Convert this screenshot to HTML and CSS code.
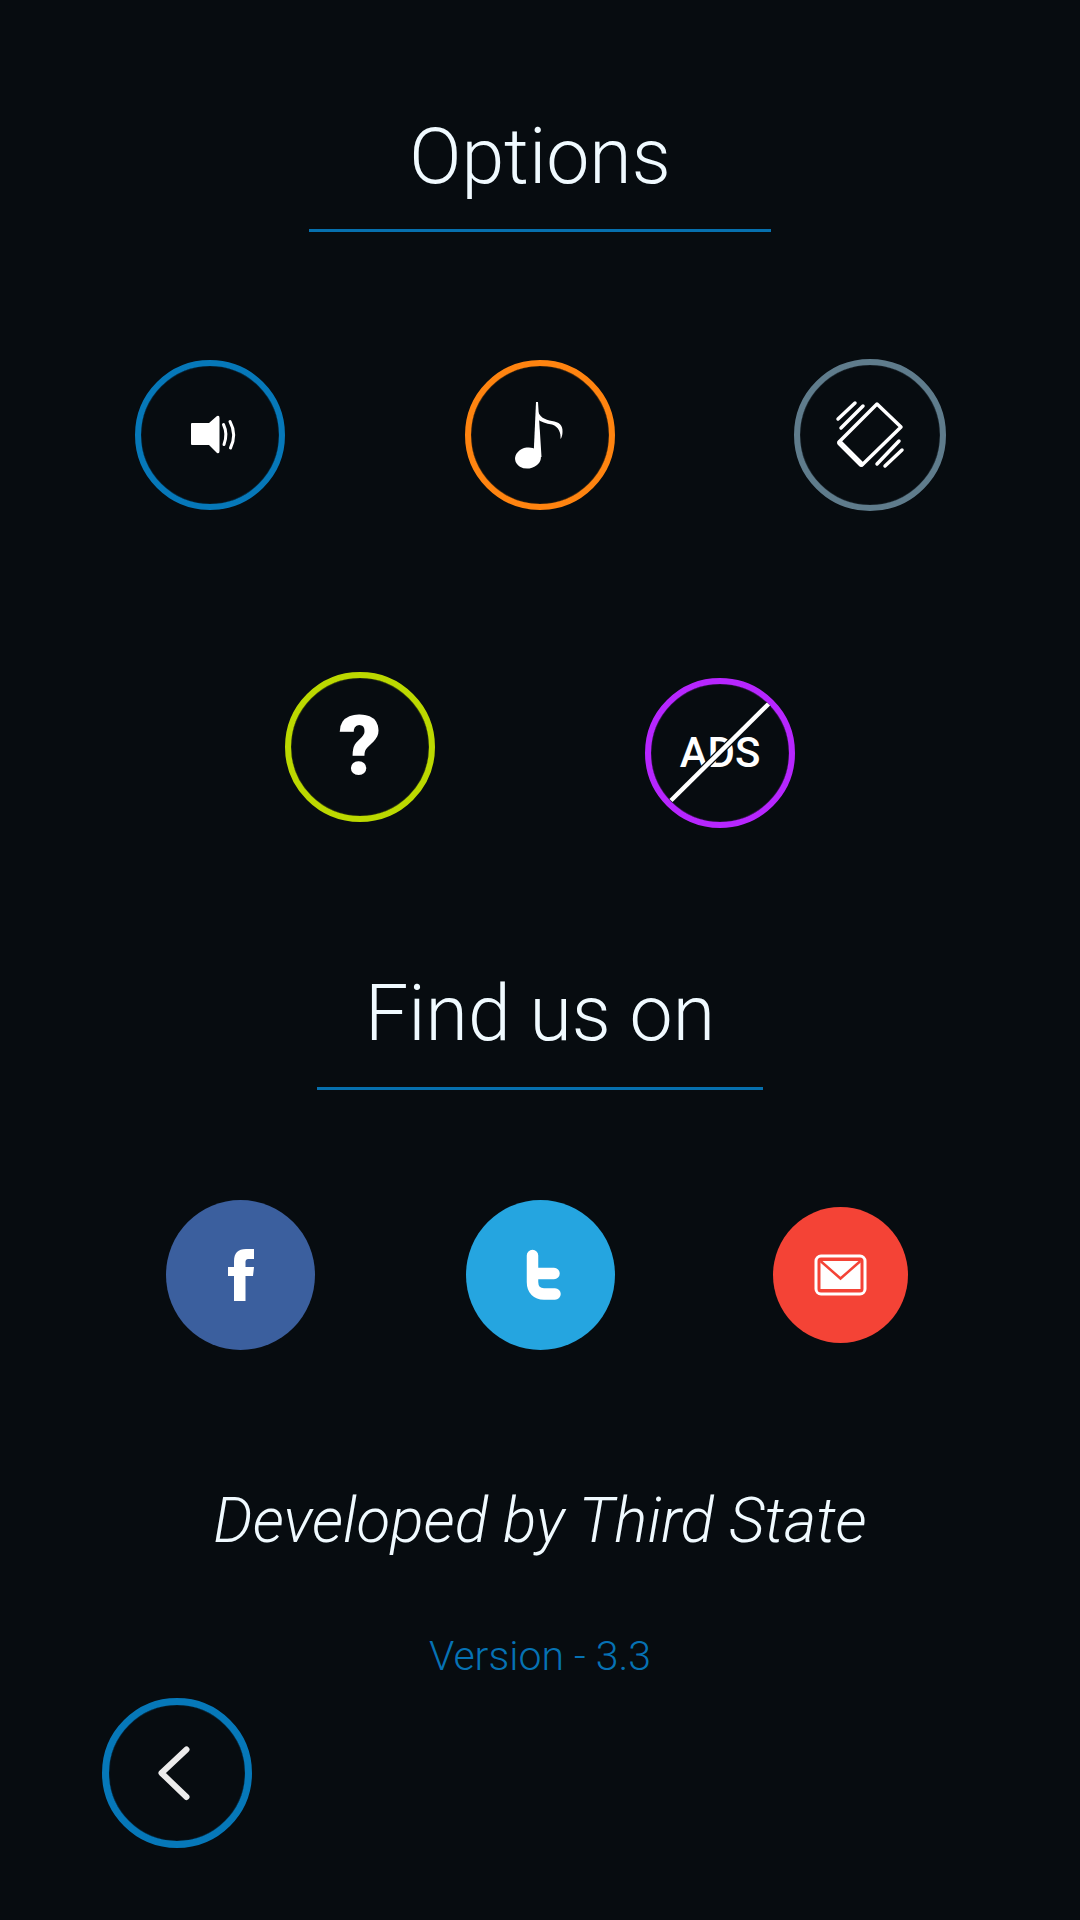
FILE: index.html
```html
<!DOCTYPE html>
<html lang="en">
<head>
    <meta charset="UTF-8">
    <meta name="viewport" content="width=device-width, initial-scale=1.0">
    <title>Options</title>
    <link rel="stylesheet" href="styles.css">
</head>
<body>

    <div class="options-screen">

        <!-- Options -->
        <div class="section-head options-head">
            <h1>Options</h1>
        </div>

        <div class="icon-row row-settings">
            <button class="round-btn ring-blue">
                <svg width="60" height="60" viewBox="0 0 60 60">
                    <path d="M12 18 H29 L37 11 Q39.500 10 39.500 13 V46 Q39.500 49 37 48 L29 40 H12 Q11 40 11 39 V19 Q11 18 12 18 Z" fill="#fff"/>
                    <path d="M43.500 19.500 Q48 29 44 39.500" class="line thin"/>
                    <path d="M50 16.500 Q57 29.500 50.500 43" class="line thin"/>
                </svg>
            </button>
            <button class="round-btn ring-orange">
                <svg width="70" height="80" viewBox="0 0 70 80">
                    <ellipse cx="23" cy="63" rx="13" ry="10.500" fill="#fff" transform="rotate(-8 23 63)"/>
                    <path d="M28.500 62 L31 7 H33 L36.500 62 Z" fill="#fff"/>
                    <path d="M32 14 C34 22 40 25 47 26 C54 27 58 30 57.500 37 C57.500 40 56.500 43 55.500 44 C56 38 54 32 47 29.500 C41 28.500 36 27 32 24 Z" fill="#fff"/>
                </svg>
            </button>
            <button class="round-btn ring-slate ring-wide">
                <svg width="70" height="70" viewBox="0 0 70 70">
                    <path d="M42 4 L66 27 L27 65 L4 42 Z" class="line phone"/>
                    <path d="M5 43 L26 64" class="line bezel"/>
                    <path d="M3 19 L20 3 M6 28 L28 6 M42 64 L64 41 M50 66 L67 50" class="line phone"/>
                </svg>
            </button>
        </div>

        <div class="icon-row row-extra">
            <button class="round-btn ring-lime">
                <span class="help-mark">?</span>
            </button>
            <button class="round-btn ring-purple no-ads">
                <span class="ads-label">ADS</span>
                <svg class="ads-slash" width="150" height="150" viewBox="0 0 150 150">
                    <path d="M123.500 26 L26 122.500" class="slash-edge"/>
                    <path d="M123.500 26 L26 122.500" class="slash"/>
                </svg>
            </button>
        </div>

        <!-- Find us on -->
        <div class="section-head find-head">
            <h1>Find us on</h1>
        </div>

        <div class="icon-row row-social">
            <button class="round-btn fill-facebook">
                <svg width="60" height="60" viewBox="0 0 60 60">
                    <path d="M23 56 V31 H17 V22 H23 V16 C23 8 27 4 35 4 H43 V14 H38 C35 14 34.500 15 34.500 18 V22 H43 L42 31 H34.500 V56 Z" fill="#fff"/>
                </svg>
            </button>
            <button class="round-btn fill-twitter">
                <svg width="60" height="60" viewBox="0 0 60 60">
                    <path d="M21.500 10.500 V37 C21.500 45 26 49 33 49 H44 M21.500 28.500 H43" class="line bird"/>
                </svg>
            </button>
            <button class="round-btn fill-mail">
                <svg width="60" height="60" viewBox="0 0 60 60">
                    <rect x="5" y="11" width="49" height="38" rx="5" class="line envelope-edge"/>
                    <rect x="9.500" y="16" width="40" height="28" fill="#fff"/>
                    <path d="M9.500 16 L29.500 33.500 L49.500 16" class="envelope-fold"/>
                </svg>
            </button>
        </div>

        <p class="credit">Developed by Third State</p>
        <p class="version">Version - 3.3</p>

        <button class="round-btn ring-blue ring-heavy back-btn">
            <svg width="60" height="60" viewBox="0 0 60 60">
                <path d="M39.500 6.500 L14.500 30 L39.500 54" class="line chevron"/>
            </svg>
        </button>

    </div>

</body>
</html>
```

FILE: styles.css
```css
* { margin: 0; padding: 0; box-sizing: border-box; }
body { background: #070c10; color: #f0faff; font-family: 'Roboto', 'Liberation Sans', sans-serif; }

.options-screen { display: flex; flex-direction: column; align-items: center; height: 1920px; }

/* Section headings */
.section-head { border-bottom: 3px solid #0670ae; text-align: center; }
.section-head h1 { font-size: 77px; font-weight: 300; line-height: 74px; }
.options-head { width: 462px; margin-top: 120px; padding-bottom: 35px; }
.find-head { width: 446px; margin-top: 149px; padding-bottom: 36px; }

/* Icon rows */
.icon-row { display: grid; justify-items: center; align-items: center; }
.row-settings { grid-template-columns: repeat(3, 330px); margin-top: 127px; }
.row-extra { grid-template-columns: repeat(2, 360px); align-items: start; margin-top: 161px; }
.row-social { grid-template-columns: repeat(3, 300px); margin-top: 110px; margin-left: 1px; }

/* Round buttons */
.round-btn {
    width: 150px; height: 150px; border-radius: 50%; border: 6px solid var(--ring, transparent); background: transparent;
    box-shadow: inset 0 0 1px var(--ring, transparent);
    display: flex; align-items: center; justify-content: center; position: relative; color: #fff; font-family: inherit;
}
.ring-blue { --ring: #0678b9; }
.ring-orange { --ring: #ff8410; }
.ring-slate { --ring: #5f7c8c; }
.ring-lime { --ring: #bcd900; }
.ring-purple { --ring: #b726ff; }
.ring-wide { width: 152px; height: 152px; }
.ring-heavy { border-width: 7px; }

.fill-facebook { background: #3b5f9e; border: none; width: 149px; }
.fill-twitter { background: #25a5e0; border: none; width: 149px; }
.fill-mail { background: #f44336; border: none; width: 135px; height: 136px; }

/* Icon strokes */
.line { fill: none; stroke: #fff; stroke-linecap: round; stroke-linejoin: round; }
.thin { stroke-width: 3; }
.phone { stroke-width: 3.5; }
.bezel { stroke-width: 5.5; }
.bird { stroke-width: 11.5; }
.envelope-edge { stroke-width: 3; }
.envelope-fold { fill: none; stroke: #f44336; stroke-width: 2.5; }
.chevron { stroke-width: 6; stroke: #ececec; }

.help-mark { font-size: 84px; font-weight: 900; line-height: 1; }

/* Remove ads button */
.no-ads { margin-top: 6px; }
.ads-label { font-size: 42px; font-weight: 500; line-height: 1; }
.ads-slash { position: absolute; left: -6px; top: -6px; }
.slash-edge { stroke: #070c10; stroke-width: 7; }
.slash { stroke: #fff; stroke-width: 4.5; }

/* Footer text */
.credit { font-size: 62px; font-weight: 300; font-style: italic; line-height: 62px; margin-top: 140px; }
.version { font-size: 41px; font-weight: 300; line-height: 40px; color: #0672b4; margin-top: 84px; }

.back-btn { align-self: flex-start; margin-left: 102px; margin-top: 22px; }
```
